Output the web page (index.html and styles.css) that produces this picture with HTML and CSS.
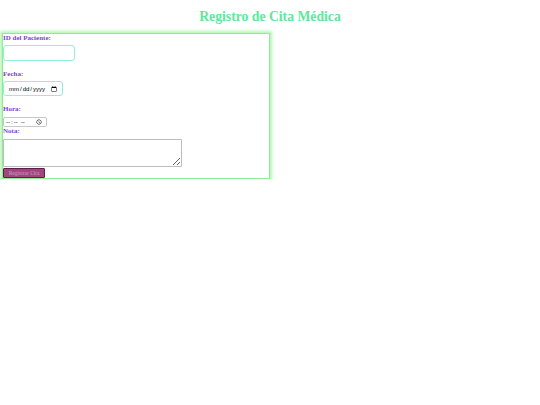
FILE: index.html
```html
<!DOCTYPE html>
<html lang="es">
<head>
<meta charset="utf-8">
<title>Registro de Cita Médica</title>
<link rel="stylesheet" href="styles.css">
</head>
<body>
<h1 class="title">Registro de Cita Médica</h1>
<form class="cita-form">
  <label class="field-label" for="id">ID del Paciente:</label>
  <input class="field-input text-input" type="text" id="id">
  <label class="field-label" for="fecha">Fecha:</label>
  <input class="field-input date-input" type="date" id="fecha">
  <label class="field-label" for="hora">Hora:</label>
  <input class="time-input" type="time" id="hora">
  <label class="field-label nota-label" for="nota">Nota:</label>
  <textarea class="nota-area" id="nota"></textarea>
  <button class="submit-btn" type="submit">Registrar Cita</button>
</form>
</body>
</html>
```
FILE: styles.css
```css
html, body {
  margin: 0;
  padding: 0;
  background: #ffffff;
}
body {
  padding: 0 2px;
  font-family: "Liberation Serif", "Times New Roman", serif;
}
.title {
  margin: 0;
  padding-top: 9px;
  height: 24px;
  text-align: center;
  font-size: 13.7px;
  font-weight: bold;
  line-height: 16px;
  color: #5ee89c;
}
.cita-form {
  width: 50%;
  box-sizing: border-box;
  border: 1px solid #8eef8e;
  box-shadow: 0 0 3px 2px #b4f6b4;
  padding: 0;
  display: flex;
  flex-direction: column;
  align-items: flex-start;
  height: 146px;
}
.field-label {
  font-size: 7px;
  font-weight: bold;
  color: #7b3fd4;
  line-height: 8px;
  margin-bottom: 3px;
}
.field-input {
  box-sizing: border-box;
  border: 1px solid #8ff0e0;
  border-radius: 3px;
  height: 16px;
  margin: 0 0 9px 0;
  font-size: 6px;
  padding: 0 3px 0 4px;
  font-family: "Liberation Sans", sans-serif;
  background: #fff;
}
.text-input {
  width: 72px;
}
.date-input {
  width: 60px;
}
.time-input {
  box-sizing: border-box;
  width: 44px;
  height: 10px;
  font-size: 6px;
  padding: 0 1px;
  margin: 1px 0 0 0;
  border: 1px solid #c8c8c8;
  border-radius: 2px;
  font-family: "Liberation Sans", sans-serif;
}
.nota-label {
  margin-bottom: 4px;
}
.nota-area {
  box-sizing: border-box;
  width: 179px;
  height: 28px;
  margin: 0 0 1px 0;
  border: 1px solid #bdbdbd;
  border-radius: 1px;
  font-size: 7px;
}
.submit-btn {
  box-sizing: border-box;
  width: 42px;
  height: 10px;
  padding: 0;
  font-size: 5.5px;
  font-family: "Liberation Serif", serif;
  color: #c8a0c0;
  background: #a2457f;
  border: 1px solid #5a2048;
  border-radius: 1px;
  line-height: 8px;
}
```
